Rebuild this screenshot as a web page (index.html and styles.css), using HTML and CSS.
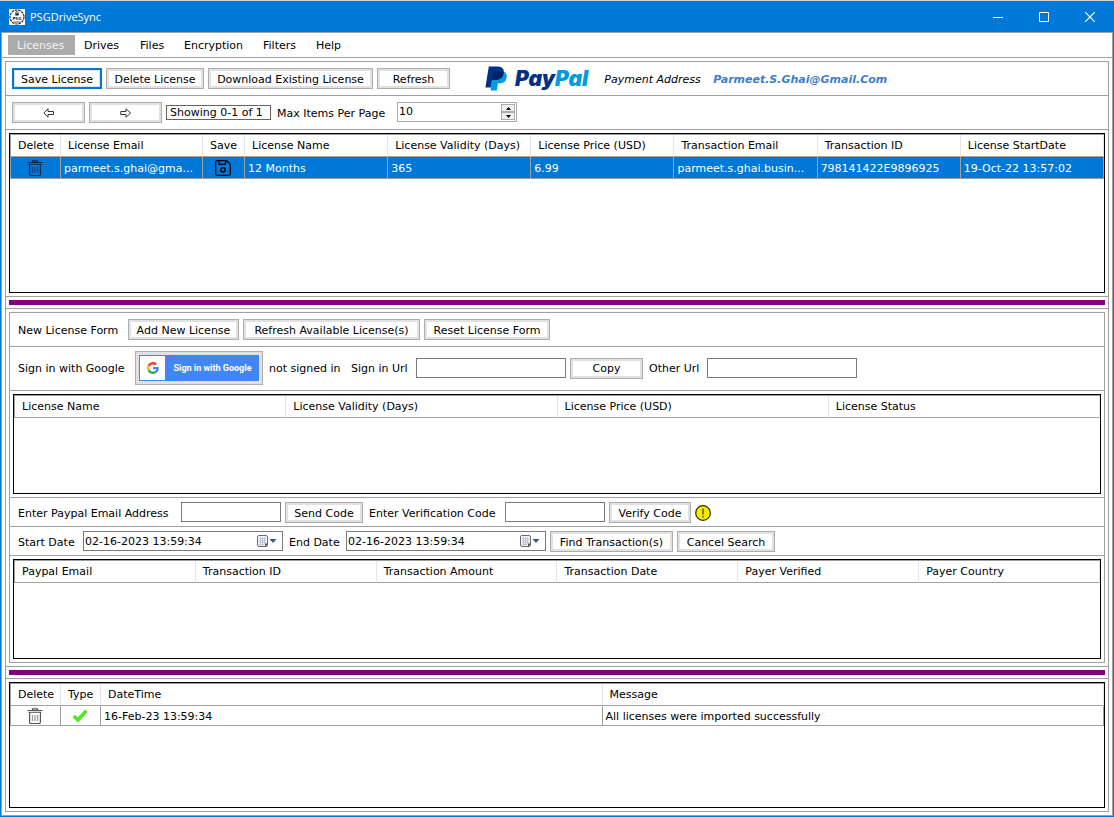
FILE: index.html
```html
<!DOCTYPE html>
<html lang="en">
<head>
<meta charset="utf-8">
<title>PSGDriveSync</title>
<link rel="stylesheet" href="styles.css">
</head>
<body>
<svg class="defs" aria-hidden="true">
  <symbol id="trash" viewBox="0 0 16 16">
    <path d="M5.500 2V.8h5V2" fill="none" stroke="currentColor" stroke-width="1.200"/>
    <path d="M.5 2.500h15M1.500 4.300h13" fill="none" stroke="currentColor" stroke-width="1"/>
    <path d="M2.600 4.300v10c0 .8.400 1.200 1.200 1.200h8.400c.8 0 1.200-.4 1.200-1.200v-10" fill="none" stroke="currentColor" stroke-width="1.200"/>
    <path d="M5.500 7v6M8 7v6M10.500 7v6" fill="none" stroke="currentColor" stroke-width="1.300" opacity=".6"/>
  </symbol>
  <symbol id="calendar" viewBox="0 0 20 12">
    <rect x=".5" y=".5" width="10" height="11" rx="1.500" fill="#f4f6fa" stroke="#6e6a70"/>
    <path d="M2 3.500h7M2 5.500h7M2 7.500h7M2 9.500h5M3.500 2v8.500M5.500 2v8.500M7.500 2v7" stroke="#b6bfd2" stroke-width=".8"/>
    <path d="M11 8.500H8V12z" fill="#5b5154"/>
    <path d="M12.500 4h7L16 8z" fill="#41578a"/>
  </symbol>
</svg>
<div class="window">
  <header class="titlebar">
    <svg class="app-icon" viewBox="0 0 16 16" aria-hidden="true">
      <rect width="16" height="16" fill="#fff"/>
      <circle cx="8" cy="8" r="7" fill="none" stroke="#222b38" stroke-width="1.200" stroke-dasharray="2.600 .8"/>
      <path d="M6.800 4.300v-.6a1.200 1.200 0 0 1 2.400 0v.6" fill="none" stroke="#222b38" stroke-width=".8"/>
      <rect x="6.300" y="4.200" width="3.400" height="2.400" fill="#222b38"/>
      <text x="8" y="11.300" text-anchor="middle" class="app-icon-text">PSG</text>
      <path d="M4.500 13h7" stroke="#222b38" stroke-width=".8"/>
    </svg>
    <h1 class="title">PSGDriveSync</h1>
    <button class="caption" aria-label="Minimize"><svg width="10" height="10" viewBox="0 0 10 10"><path d="M0 5.500h10" stroke="#fff"/></svg></button>
    <button class="caption" aria-label="Maximize"><svg width="10" height="10" viewBox="0 0 10 10"><path d="M.5.5h9v9h-9z" fill="none" stroke="#fff"/></svg></button>
    <button class="caption" aria-label="Close"><svg width="10" height="10" viewBox="0 0 10 10"><path d="M0 0l10 10M10 0L0 10" stroke="#fff" stroke-width="1.200"/></svg></button>
  </header>
  <div class="client">
    <nav class="menu">
      <button class="menu-item active m-licenses">Licenses</button>
      <button class="menu-item m-drives">Drives</button>
      <button class="menu-item m-files">Files</button>
      <button class="menu-item m-encryption">Encryption</button>
      <button class="menu-item m-filters">Filters</button>
      <button class="menu-item m-help">Help</button>
    </nav>
    <main class="page">
      <div class="panel">
        <div class="row">
          <button class="btn default b-save">Save License</button>
          <button class="btn b-delete">Delete License</button>
          <button class="btn b-download">Download Existing License</button>
          <button class="btn wide">Refresh</button>
          <div class="paypal">
            <svg class="paypal-mark" viewBox="0 0 22 25" aria-hidden="true">
              <clipPath id="back-p"><path d="M8.300 5.600h7c3.300 0 5.200.8 6 2.600.5 1.200.4 2.700 0 4.100-1 3.700-3.600 5-7.300 5h-1.100l-1.200 6.800H5.500z"/></clipPath>
              <path d="M8.300 5.600h9.500c2 .5 3.200 1.300 3.700 2.800.4 1.200.3 2.600-.1 4-1 3.600-3.600 4.900-7.300 4.900h-1.200L11.800 24.500H5.600z" fill="#009cde"/>
              <path d="M3.800.4h8.700c3.300 0 5.800 1.400 6.200 3.900.2 1.400 0 2.600-.3 3.700-1.200 4.200-4.200 5.800-8.200 5.800H8c-.6 0-1 .3-1.100.9L5.800 21.600H.4z" fill="#003087"/>
              <path d="M3.800.4h8.700c3.300 0 5.800 1.400 6.200 3.900.2 1.400 0 2.600-.3 3.700-1.200 4.200-4.200 5.800-8.200 5.800H8c-.6 0-1 .3-1.100.9L5.800 21.600H.4z" fill="#012169" clip-path="url(#back-p)"/>
            </svg>
            <span class="paypal-word"><span class="pay">Pay</span><span class="pal">Pal</span></span>
          </div>
          <span class="address-label">Payment Address</span>
          <a class="address" href="mailto:Parmeet.S.Ghai@Gmail.Com">Parmeet.S.Ghai@Gmail.Com</a>
        </div>
        <div class="row">
          <button class="btn wide" aria-label="Previous page"><svg width="12" height="10" viewBox="0 0 12 10"><path d="M5 .8.900 5 5 9.200V6.500h5.500v-3H5z" fill="#fff" stroke="#333"/></svg></button>
          <button class="btn wide" aria-label="Next page"><svg width="12" height="10" viewBox="0 0 12 10"><path d="M6 .8 10.600 5 6 9.200V6.500H.8v-3H6z" fill="#fff" stroke="#333"/></svg></button>
          <span class="showing">Showing 0-1 of 1</span>
          <label class="label l-max" for="max-items">Max Items Per Page</label>
          <div class="spin">
            <input class="spin-value" id="max-items" type="text" inputmode="numeric" value="10">
            <div class="spin-buttons">
              <button class="spin-btn" aria-label="Increase"><svg width="5" height="3" viewBox="0 0 5 3"><path d="M0 3h5L2.500 0z"/></svg></button>
              <button class="spin-btn" aria-label="Decrease"><svg width="5" height="3" viewBox="0 0 5 3"><path d="M0 0h5L2.500 3z"/></svg></button>
            </div>
          </div>
        </div>
        <div class="pane licenses">
          <div class="grid-box">
            <table class="grid">
              <colgroup><col class="c-delete"><col class="c-email"><col class="c-save"><col><col><col><col><col><col></colgroup>
              <thead><tr><th>Delete</th><th>License Email</th><th>Save</th><th>License Name</th><th>License Validity (Days)</th><th>License Price (USD)</th><th>Transaction Email</th><th>Transaction ID</th><th>License StartDate</th></tr></thead>
              <tbody><tr class="selected">
                <td class="icon-cell"><button class="icon-btn" aria-label="Delete license"><svg class="icon trash-dark"><use href="#trash"/></svg></button></td>
                <td>parmeet.s.ghai@gma...</td>
                <td class="icon-cell"><button class="icon-btn" aria-label="Save license"><svg class="icon" viewBox="0 0 16 16"><path d="M2.500.7h9l3.800 3.500v9.300c0 1.200-.6 1.800-1.800 1.800h-11c-1.200 0-1.800-.6-1.800-1.800v-11C.7 1.300 1.300.7 2.500.7z" fill="none" stroke="#000" stroke-width="1.200"/><path d="M4 .7v3.600h6.500V.7" fill="none" stroke="#000" stroke-width="1.200"/><circle cx="8" cy="9.800" r="2.200" fill="none" stroke="#000" stroke-width="1.300"/></svg></button></td>
                <td>12 Months</td><td>365</td><td>6.99</td><td>parmeet.s.ghai.busin...</td><td>798141422E9896925</td><td>19-Oct-22 13:57:02</td>
              </tr></tbody>
            </table>
          </div>
        </div>
        <div class="splitter"><div class="splitter-bar"></div></div>
        <div class="pane form-pane">
          <section class="form">
            <div class="row">
              <span class="label l-form">New License Form</span>
              <button class="btn b-add">Add New License</button>
              <button class="btn b-available">Refresh Available License(s)</button>
              <button class="btn b-reset">Reset License Form</button>
            </div>
            <div class="row google-row">
              <span class="label l-google">Sign in with Google</span>
              <button class="google-btn">
                <span class="google-logo"><svg width="12" height="12" viewBox="0 0 48 48" aria-hidden="true"><path fill="#EA4335" d="M24 9.500c3.540 0 6.710 1.220 9.210 3.600l6.850-6.850C35.900 2.380 30.470 0 24 0 14.620 0 6.510 5.380 2.560 13.220l7.980 6.190C12.430 13.720 17.740 9.500 24 9.500z"/><path fill="#4285F4" d="M46.980 24.550c0-1.570-.15-3.090-.38-4.550H24v9.020h12.940c-.58 2.960-2.260 5.480-4.780 7.180l7.730 6c4.510-4.180 7.090-10.360 7.090-17.650z"/><path fill="#FBBC05" d="M10.530 28.590c-.48-1.450-.76-2.990-.76-4.590s.27-3.140.76-4.590l-7.980-6.190C.92 16.460 0 20.120 0 24c0 3.880.92 7.540 2.560 10.780l7.970-6.190z"/><path fill="#34A853" d="M24 48c6.480 0 11.930-2.130 15.890-5.810l-7.730-6c-2.150 1.450-4.920 2.300-8.160 2.300-6.260 0-11.570-4.220-13.470-9.910l-7.980 6.190C6.510 42.620 14.620 48 24 48z"/></svg></span>
                <span class="google-text">Sign in with Google</span>
              </button>
              <span class="label l-status">not signed in</span>
              <label class="label l-signin" for="signin-url">Sign in Url</label>
              <input class="field url" id="signin-url" type="text">
              <button class="btn wide">Copy</button>
              <label class="label l-other" for="other-url">Other Url</label>
              <input class="field url" id="other-url" type="text">
            </div>
            <div class="pane sub-pane">
              <div class="grid-box">
                <table class="grid">
                  <thead><tr><th>License Name</th><th>License Validity (Days)</th><th>License Price (USD)</th><th>License Status</th></tr></thead>
                </table>
              </div>
            </div>
            <div class="row tight">
              <label class="label l-email" for="paypal-email">Enter Paypal Email Address</label>
              <input class="field code" id="paypal-email" type="text">
              <button class="btn b-send">Send Code</button>
              <label class="label l-code" for="verify">Enter Verification Code</label>
              <input class="field code" id="verify" type="text">
              <button class="btn b-verify">Verify Code</button>
              <svg class="icon" viewBox="0 0 16 16" role="img" aria-label="Warning"><circle cx="8" cy="8" r="7.300" fill="#ffeb00" stroke="#2b2b00" stroke-width="1.200"/><path d="M8 3.500v6" stroke="#806f00" stroke-width="1.800"/><circle cx="8" cy="11.800" r="1" fill="#806f00"/></svg>
            </div>
            <div class="row tight">
              <label class="label l-start" for="start-date">Start Date</label>
              <div class="date">
                <input class="date-value" id="start-date" type="text" value="02-16-2023 13:59:34">
                <button class="date-btn" aria-label="Choose start date"><svg width="20" height="12"><use href="#calendar"/></svg></button>
              </div>
              <label class="label l-end" for="end-date">End Date</label>
              <div class="date">
                <input class="date-value" id="end-date" type="text" value="02-16-2023 13:59:34">
                <button class="date-btn" aria-label="Choose end date"><svg width="20" height="12"><use href="#calendar"/></svg></button>
              </div>
              <button class="btn b-find">Find Transaction(s)</button>
              <button class="btn b-cancel">Cancel Search</button>
            </div>
            <div class="pane sub-pane">
              <div class="grid-box">
                <table class="grid">
                  <thead><tr><th>Paypal Email</th><th>Transaction ID</th><th>Transaction Amount</th><th>Transaction Date</th><th>Payer Verified</th><th>Payer Country</th></tr></thead>
                </table>
              </div>
            </div>
          </section>
        </div>
        <div class="splitter"><div class="splitter-bar"></div></div>
        <div class="pane log">
          <div class="grid-box">
            <table class="grid">
              <colgroup><col class="c-delete"><col class="c-type"><col><col></colgroup>
              <thead><tr><th>Delete</th><th>Type</th><th>DateTime</th><th>Message</th></tr></thead>
              <tbody><tr class="short">
                <td class="icon-cell"><button class="icon-btn" aria-label="Delete message"><svg class="icon trash"><use href="#trash"/></svg></button></td>
                <td class="icon-cell"><svg class="icon" viewBox="0 0 16 16" role="img" aria-label="Success"><path d="M.5 9.300 3 6.700l2.700 2.800L13.200 1.500 15.700 4 6 14.500z" fill="#4bea22"/></svg></td>
                <td>16-Feb-23 13:59:34</td><td>All licenses were imported successfully</td>
              </tr></tbody>
            </table>
          </div>
        </div>
      </div>
    </main>
  </div>
</div>
</body>
</html>
```
FILE: styles.css
```css
* { box-sizing: border-box; }

body {
  margin: 0;
  background: #d3d3d3;
  color: #000;
  font: 11px/15px Verdana, "DejaVu Sans", sans-serif;
}

button, input { font: inherit; color: inherit; margin: 0; }
button { padding: 0; }
svg { display: block; flex: none; }
.defs { position: absolute; width: 0; height: 0; }

.window {
  display: flex;
  flex-direction: column;
  min-height: 100vh;
  border: 1px solid #d3d3d3;
  border-width: 1px 0;
}

.titlebar {
  display: flex;
  align-items: center;
  height: 31px;
  padding-left: 9px;
  background: #0078d7;
  color: #fff;
}
.app-icon { width: 16px; height: 16px; }
.app-icon-text { font: bold 4px "DejaVu Sans", sans-serif; fill: #222b38; }
.title {
  flex: 1;
  margin: 0 0 0 5px;
  font: 11px/16px "Segoe UI", "Open Sans", sans-serif;
}
.caption {
  display: grid;
  place-items: center;
  width: 46px;
  height: 31px;
  border: 0;
  background: none;
}
.caption:last-child { margin-right: 1px; }

.client {
  flex: 1;
  display: flex;
  flex-direction: column;
  border: 1px solid #a0a0a0;
  background: #fff;
  outline: 1px solid #0078d7;
  margin: 0 1px 1px;
}

.menu {
  display: flex;
  padding: 2px 6px;
  border-bottom: 1px solid #a0a0a0;
}
.menu-item {
  height: 20px;
  padding: 0 0 0 9px;
  border: 0;
  background: none;
  text-align: left;
}
.menu-item.active { background: #ababab; color: #f4f4f4; }
.m-licenses { min-width: 67px; }
.m-drives { min-width: 56px; }
.m-files { min-width: 44px; }
.m-encryption { min-width: 79px; }
.m-filters { min-width: 53px; }
.m-help { min-width: 44px; }

.page { flex: 1; display: flex; padding: 3px; }
.panel, .form {
  flex: 1;
  display: flex;
  flex-direction: column;
  min-width: 0;
  border: 1px solid #a0a0a0;
}
.panel > *, .form > * { border-bottom: 1px solid #a0a0a0; }
.panel > :last-child, .form > :last-child { border-bottom: 0; }

.row {
  display: flex;
  align-items: flex-start;
  gap: 4px;
  padding: 6px;
}
.row.tight { padding: 4px 6px 3px; }
.row.google-row { align-items: center; padding: 4px 6px 5px; }

.btn {
  display: grid;
  place-items: center;
  height: 21px;
  border: 1px solid #adadad;
  background: #fff;
  box-shadow: inset 0 0 0 2px #e1e1e1;
  padding: 1px 5px 0;
  white-space: nowrap;
}
.btn.wide { width: 73px; }
.btn.default {
  border: 2px solid #0078d7;
  box-shadow: inset 0 0 0 1px #e1e1e1;
}
.b-save { min-width: 90px; }
.b-delete { min-width: 98px; }
.b-download { min-width: 165px; }
.b-add { min-width: 111px; }
.b-available { min-width: 177px; }
.b-reset { min-width: 126px; }
.b-send { min-width: 78px; }
.b-verify { min-width: 82px; }
.b-find { min-width: 123px; }
.b-cancel { min-width: 98px; }

.label {
  align-self: center;
  padding: 1px 2px 0;
  white-space: nowrap;
}
.l-max { min-width: 118px; }
.l-form { min-width: 108px; }
.l-google { min-width: 115px; }
.l-status { min-width: 78px; }
.l-signin { min-width: 63px; }
.l-other { min-width: 56px; }
.l-email { min-width: 161px; }
.l-code { min-width: 134px; }
.l-start { min-width: 63px; }
.l-end { min-width: 55px; }

.paypal {
  display: flex;
  align-items: center;
  gap: 8px;
  height: 21px;
  margin-left: 31px;
}
.paypal-mark { width: 22px; height: 25px; }
.paypal-word { min-width: 72px; font: italic 900 21px/24px Inter, sans-serif; }
.pay { color: #003087; }
.pal { color: #009cde; }
.address-label, .address {
  align-self: center;
  padding-top: 1px;
  font-style: italic;
  white-space: nowrap;
}
.address-label { min-width: 105px; margin-left: 12px; }
.address {
  color: #3d7dca;
  font-weight: bold;
  text-decoration: none;
}

.showing {
  align-self: center;
  min-width: 105px;
  height: 15px;
  padding: 0 3px;
  border: 1px solid #646464;
  line-height: 14px;
  white-space: nowrap;
}

.spin {
  display: flex;
  width: 120px;
  height: 20px;
  padding: 1px;
  border: 1px solid #abadb3;
}
.spin-value { flex: 1; min-width: 0; padding: 0 0 1px; border: 0; }
.spin-buttons { display: flex; flex-direction: column; width: 14px; }
.spin-btn {
  flex: 1;
  display: grid;
  place-items: center;
  border: 1px solid #adadad;
  background: #f0f0f0;
}

.pane { display: flex; flex-direction: column; padding: 3px; }
.licenses { flex: 160 0 auto; }
.licenses > .grid-box { min-height: 160px; }
.form-pane { flex: 200 0 auto; }
.sub-pane { flex: 1 0 auto; }
.sub-pane > .grid-box { min-height: 100px; }
.log { flex: 126 0 auto; }
.log > .grid-box { min-height: 126px; }

.splitter { padding: 3px; }
.splitter-bar { height: 5px; background: #800080; }

.grid-box { flex: 1; border: 1px solid #000; }
.grid {
  width: 100%;
  table-layout: fixed;
  border-collapse: separate;
  border-spacing: 0;
  border: 1px solid #a0a0a0;
  border-width: 1px 0 0 1px;
}
.grid th {
  height: 22px;
  padding: 0 0 0 7px;
  border-right: 1px solid #e5e5e5;
  border-bottom: 1px solid #a0a0a0;
  font-weight: normal;
  text-align: left;
  white-space: nowrap;
}
.grid td {
  height: 22px;
  padding: 1px 0 0 3px;
  border-right: 1px solid #a0a0a0;
  border-bottom: 1px solid #a0a0a0;
  overflow: hidden;
  white-space: nowrap;
}
.grid .short td { height: 20px; }
.grid .selected td { background: #0078d7; color: #fff; }
.grid td.icon-cell { padding: 0 2px 0 0; }
.c-delete { width: 50px; }
.c-email { width: 142px; }
.c-save { width: 42px; }
.c-type { width: 40px; }
.icon { width: 16px; height: 16px; margin: 0 auto; }
.row > .icon { align-self: center; margin: 0; }
.icon-btn {
  display: block;
  width: 100%;
  border: 0;
  background: none;
}
.trash { color: #555; }
.trash-dark { color: #06294b; }

.google-btn {
  display: flex;
  width: 128px;
  height: 34px;
  padding: 3px;
  border: 1px solid #adadad;
  background: #e1e1e1;
}
.google-logo {
  display: grid;
  place-items: center;
  width: 27px;
  height: 26px;
  border: 1px solid #4285f4;
  background: #fff;
}
.google-text {
  flex: 1;
  height: 26px;
  background: #4285f4;
  color: #fff;
  font: bold 9px/26px Roboto, sans-serif;
  white-space: nowrap;
}

.field {
  height: 20px;
  padding: 0 2px;
  border: 1px solid #7a7a7a;
  background: #fff;
}
.field.url { width: 150px; }
.field.code { width: 100px; }

.date {
  display: flex;
  align-items: center;
  width: 200px;
  height: 20px;
  padding: 0 5px 0 1px;
  border: 1px solid #7a7a7a;
}
.date-value { flex: 1; min-width: 0; padding: 0; border: 0; }
.date-btn { border: 0; background: none; }
```
